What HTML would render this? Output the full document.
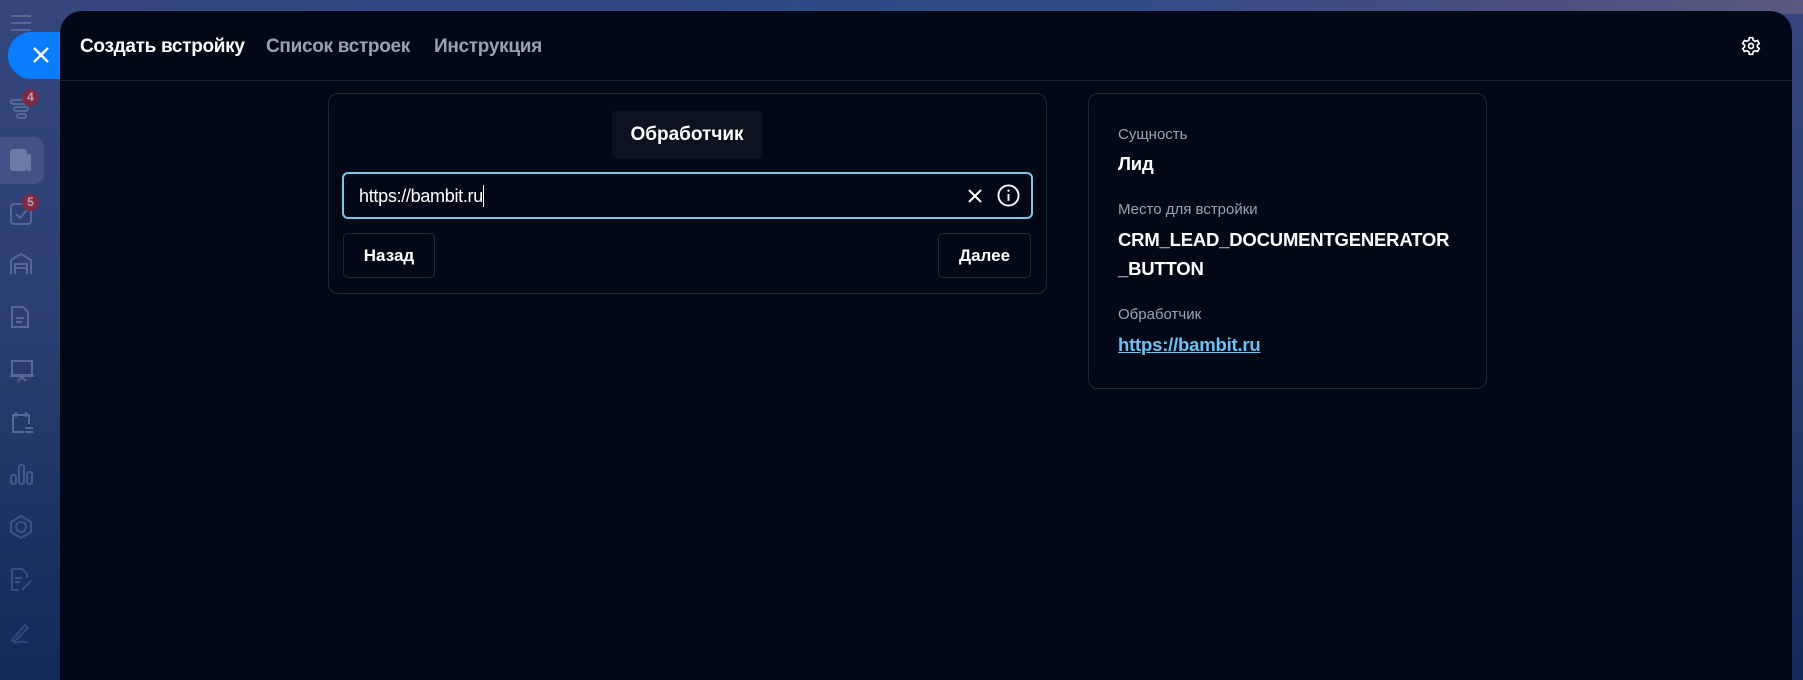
<!DOCTYPE html>
<html><head><meta charset="utf-8"><style>
*{margin:0;padding:0;box-sizing:border-box}
html,body{width:1803px;height:680px;overflow:hidden;background:#13295a}
body{position:relative;font-family:"Liberation Sans","DejaVu Sans",sans-serif}
.bg{position:absolute;left:0;top:0;width:1803px;height:680px;background:linear-gradient(180deg,#34467c 0%,#2c3f72 45%,#13295a 100%)}
.top{position:absolute;left:0;top:0;width:1803px;height:14px;background:linear-gradient(90deg,#35467c,#2f4a86 60%,#4b4f7e 85%,#5a5a80)}
.panel{position:absolute;left:60px;top:11px;width:1732px;height:680px;background:#030816;border-radius:22px 22px 0 0}
.close{position:absolute;left:8px;top:32px;width:52px;height:47px;background:#0a7cff;border-radius:24px 0 0 24px;z-index:3}
.t{position:absolute;font-size:19px;font-weight:bold;top:36px;letter-spacing:-0.3px}
.line{position:absolute;left:60px;top:80px;width:1732px;height:1px;background:#1e2738}
.card{position:absolute;border:1px solid #1f2937;border-radius:10px}
.btn{position:absolute;border:1px solid #1f2937;border-radius:5px;color:#fff;font-weight:bold;font-size:17px;display:flex;align-items:center;justify-content:center}
.lab{position:absolute;left:1118px;color:#9aa3b5;font-size:15px}
.val{position:absolute;left:1118px;color:#fff;font-size:18.5px;font-weight:bold;letter-spacing:-0.2px}
.badge{position:absolute;width:17px;height:17px;border-radius:50%;background:#7d2a45;color:#c9a0b0;font-size:12px;font-weight:bold;text-align:center;line-height:17px}
.ic{position:absolute;left:10px}
</style></head><body>
<div class="bg"></div>
<div class="top"></div>
<svg class="ic" style="top:14px" width="22" height="18" viewBox="0 0 22 18" fill="none" stroke="#5a6a96" stroke-width="2"><path d="M1 2h20M1 9h20M1 16h20"/></svg>
<div class="close"><svg style="position:absolute;left:24px;top:14px" width="18" height="18" viewBox="0 0 18 18" stroke="#fff" stroke-width="2.4"><path d="M2 2l14 14M16 2L2 16"/></svg></div>
<svg class="ic" style="top:97px" width="24" height="24" viewBox="0 0 24 24" fill="none" stroke="#56679a" stroke-width="2"><rect x="1" y="3" width="20" height="4" rx="2"/><rect x="4" y="10" width="14" height="4" rx="2"/><rect x="7" y="17" width="9" height="4" rx="2"/></svg>
<div class="badge" style="left:22px;top:89px">4</div>
<div style="position:absolute;left:0;top:137px;width:44px;height:47px;background:#46588a;border-radius:0 10px 10px 0;opacity:.8"></div>
<svg class="ic" style="top:149px" width="22" height="24" viewBox="0 0 22 24" fill="#6b7ba8"><rect x="0" y="0" width="17" height="22" rx="3"/><rect x="17" y="5" width="4" height="17" rx="1"/></svg>
<svg class="ic" style="top:203px" width="22" height="22" viewBox="0 0 22 22" fill="none" stroke="#56679a" stroke-width="2"><rect x="1" y="1" width="20" height="20" rx="3"/><path d="M6 11l4 4 7-8"/></svg>
<div class="badge" style="left:22px;top:194px">5</div>
<svg class="ic" style="top:253px" width="22" height="22" viewBox="0 0 22 22" fill="none" stroke="#56679a" stroke-width="2"><path d="M1 21V7l10-6 10 6v14M5 21V11h12v10M5 15h12"/></svg>
<svg class="ic" style="top:306px" width="20" height="22" viewBox="0 0 20 22" fill="none" stroke="#56679a" stroke-width="2"><path d="M2 1h11l5 5v15H2z M6 12h8M6 16h6"/></svg>
<svg class="ic" style="top:360px" width="24" height="22" viewBox="0 0 24 22" fill="none" stroke="#56679a" stroke-width="2"><rect x="2" y="1" width="20" height="14"/><path d="M0 16h24M8 21l4-4 4 4"/></svg>
<svg class="ic" style="top:412px" width="24" height="22" viewBox="0 0 24 22" fill="none" stroke="#56679a" stroke-width="2"><path d="M14 20H3V3h16v9M6 0v5M16 0v5M15 16h8M15 20h8"/></svg>
<svg class="ic" style="top:463px" width="24" height="22" viewBox="0 0 24 22" fill="none" stroke="#46598c" stroke-width="2"><rect x="1" y="12" width="5" height="9" rx="2"/><rect x="9" y="2" width="5" height="19" rx="2"/><rect x="17" y="9" width="5" height="12" rx="2"/></svg>
<svg class="ic" style="top:515px" width="22" height="24" viewBox="0 0 22 24" fill="none" stroke="#3f5287" stroke-width="2"><path d="M11 1l10 6v10l-10 6-10-6V7z"/><circle cx="11" cy="12" r="5"/></svg>
<svg class="ic" style="top:568px" width="22" height="24" viewBox="0 0 22 24" fill="none" stroke="#3a4d84" stroke-width="2"><path d="M2 1h10l5 5v4M2 1v21h7M5 10h7M5 14h5M12 22l9-9"/></svg>
<svg class="ic" style="top:622px" width="22" height="22" viewBox="0 0 22 22" fill="none" stroke="#34487f" stroke-width="2"><path d="M2 18L15 3l3 3L5 19H2zM4 21c4 0 8-3 14 0"/></svg>

<div class="panel"></div>
<div class="t" style="left:80px;color:#fff">Создать встройку</div>
<div class="t" style="left:266px;color:#94a3b8">Список встроек</div>
<div class="t" style="left:434px;color:#94a3b8">Инструкция</div>
<svg style="position:absolute;left:1741px;top:36px" width="20" height="20" viewBox="0 0 24 24" fill="none" stroke="#fff" stroke-width="2"><path d="M10 2h4l.6 3 2.4 1.4 2.9-1 2 3.5-2.3 2v2.2l2.3 2-2 3.5-2.9-1L14.6 19 14 22h-4l-.6-3L7 17.6l-2.9 1-2-3.5 2.3-2v-2.2l-2.3-2 2-3.5 2.9 1L9.4 5z"/><circle cx="12" cy="12" r="3"/></svg>
<div class="line"></div>

<div class="card" style="left:328px;top:93px;width:719px;height:201px"></div>
<div style="position:absolute;left:612px;top:111px;width:150px;height:48px;background:#0d1220;border-radius:3px;color:#fff;font-weight:bold;font-size:19px;display:flex;align-items:center;justify-content:center">Обработчик</div>
<div style="position:absolute;left:342px;top:172px;width:691px;height:47px;border:2px solid #7cc6ea;border-radius:6px"></div>
<div style="position:absolute;left:359px;top:185px;color:#fff;font-size:18px;letter-spacing:-0.3px">https://bambit.ru<span style="display:inline-block;width:1px;height:22px;background:#fff;vertical-align:-5px"></span></div>
<svg style="position:absolute;left:968px;top:189px" width="14" height="14" viewBox="0 0 14 14" stroke="#fff" stroke-width="2"><path d="M1 1l12 12M13 1L1 13"/></svg>
<svg style="position:absolute;left:997px;top:184px" width="23" height="23" viewBox="0 0 24 24" fill="none" stroke="#fff" stroke-width="2"><circle cx="12" cy="12" r="10.5"/><path d="M12 10.5v7"/><circle cx="12" cy="7" r="1.2" fill="#fff" stroke="none"/></svg>
<div class="btn" style="left:343px;top:233px;width:92px;height:45px">Назад</div>
<div class="btn" style="left:938px;top:233px;width:93px;height:45px">Далее</div>

<div class="card" style="left:1088px;top:93px;width:399px;height:296px"></div>
<div class="lab" style="top:126px">Сущность</div>
<div class="val" style="top:153px">Лид</div>
<div class="lab" style="top:201px">Место для встройки</div>
<div class="val" style="top:229px">CRM_LEAD_DOCUMENTGENERATOR</div>
<div class="val" style="top:258px">_BUTTON</div>
<div class="lab" style="top:306px">Обработчик</div>
<div class="val" style="top:334px;color:#6ec1f5;text-decoration:underline">https://bambit.ru</div>
</body></html>
